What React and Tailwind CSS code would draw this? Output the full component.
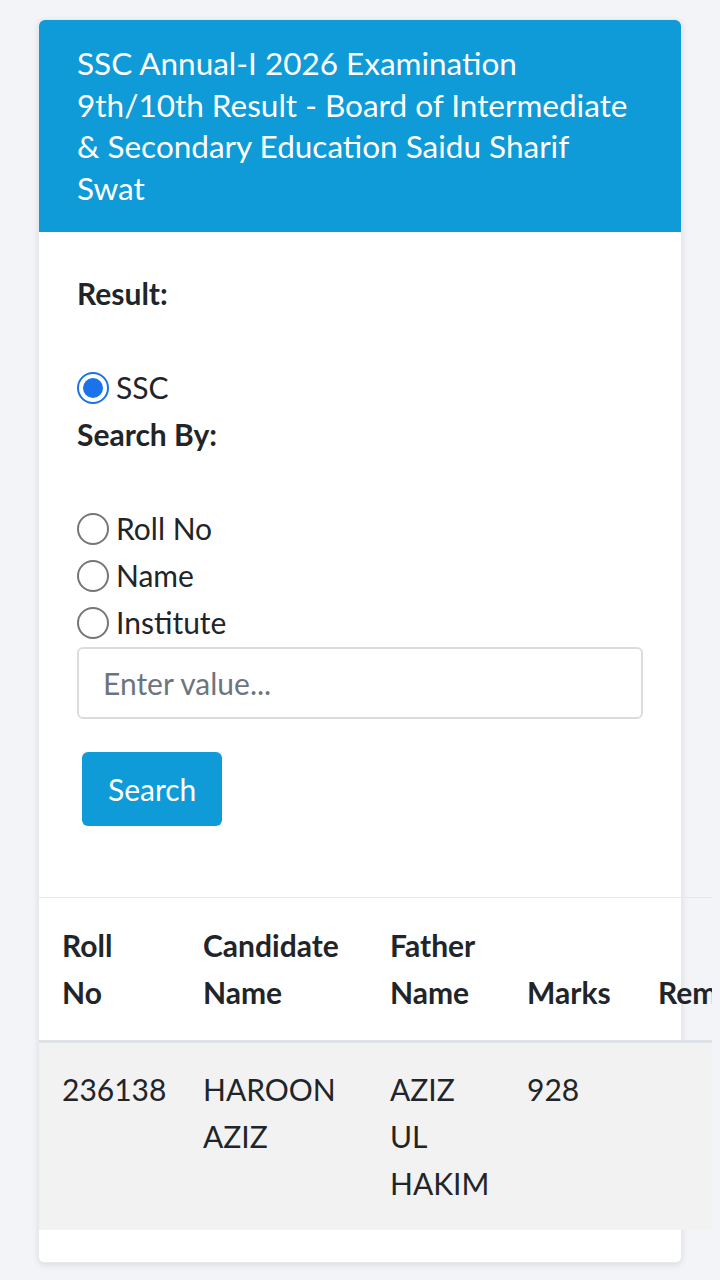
import { useState } from "react";

const FONT = "font-['Lato','Noto_Sans',sans-serif]";

const SEARCH_OPTIONS = ["Roll No", "Name", "Institute"];

const COLUMNS = [
  { label: ["Roll", "No"], width: "w-[141px]" },
  { label: ["Candidate", "Name"], width: "w-[187px]" },
  { label: ["Father", "Name"], width: "w-[137px]" },
  { label: ["", "Marks"], width: "w-[131px]" },
  { label: ["", "Remarks"], width: "w-[170px]" },
];

function Radio({ checked, label, onClick }) {
  return (
    <label className="flex items-center gap-[7px] h-[47px] cursor-pointer" onClick={onClick}>
      <span
        className={`flex items-center justify-center w-[32px] h-[32px] rounded-full border-2 ${
          checked ? "border-[#1a73e8]" : "border-[#767676]"
        } bg-white`}
      >
        {checked && <span className="w-[20px] h-[20px] rounded-full bg-[#1a73e8]" />}
      </span>
      <span className="text-[30px] text-[#212529]">{label}</span>
    </label>
  );
}

export default function App() {
  const [searchBy, setSearchBy] = useState(null);

  return (
    <div className={`${FONT} min-h-screen w-[720px] overflow-hidden bg-[#f3f4f7] pt-[19px] px-[38px] pb-[16px]`}>
      <div className="bg-white rounded-md border border-[#e8e9ec] shadow-[0_2px_6px_rgba(0,0,0,0.1)]">
        {/* Header */}
        <div className="bg-[#0f9ad8] rounded-t-md px-[38px] py-[23px] text-white text-[31.5px] leading-[41.5px]">
          SSC Annual-I 2026 Examination 9th/10th Result - Board of Intermediate &amp; Secondary Education Saidu Sharif Swat
        </div>

        {/* Form */}
        <div className="px-[38px] pt-[38px] text-[30px] leading-[47px] text-[#212529]">
          <div className="font-bold">Result:</div>
          <div className="h-[47px]" />
          <Radio checked label="SSC" />
          <div className="font-bold">Search By:</div>
          <div className="h-[47px]" />
          {SEARCH_OPTIONS.map((opt) => (
            <Radio
              key={opt}
              label={opt}
              checked={searchBy === opt}
              onClick={() => setSearchBy(opt)}
            />
          ))}
          <input
            type="text"
            placeholder="Enter value..."
            className="block w-full h-[72px] mt-[1px] rounded-md border-2 border-[#dcdcdc] px-[24px] text-[30px] text-[#212529] placeholder:text-[#6c757d] outline-none"
          />
          <button className="mt-[33px] ml-[5px] h-[74px] px-[26px] rounded-md bg-[#0f9ad8] text-white text-[30px]">
            Search
          </button>
        </div>

        {/* Results table */}
        <div className="mt-[71px] pb-[32px] w-[673px] overflow-hidden">
          <table className="w-[766px] table-fixed border-t border-[#e6e6e6] text-[30px] leading-[47px] text-[#212529]">
            <thead>
              <tr className="border-b-[3px] border-[#dee2e6]">
                {COLUMNS.map((col) => (
                  <th
                    key={col.label.join(" ")}
                    className={`${col.width} px-[23px] py-[24px] text-left align-bottom font-bold whitespace-nowrap`}
                  >
                    {col.label[0] && <div>{col.label[0]}</div>}
                    <div>{col.label[1]}</div>
                  </th>
                ))}
              </tr>
            </thead>
            <tbody>
              <tr className="bg-[#f2f2f2]">
                <td className="px-[23px] py-[23px] align-top">236138</td>
                <td className="px-[23px] py-[23px] align-top">
                  <div>HAROON</div>
                  <div>AZIZ</div>
                </td>
                <td className="px-[23px] py-[23px] align-top">
                  <div>AZIZ</div>
                  <div>UL</div>
                  <div>HAKIM</div>
                </td>
                <td className="px-[23px] py-[23px] align-top">928</td>
                <td className="px-[23px] py-[23px] align-top"></td>
              </tr>
            </tbody>
          </table>
        </div>
      </div>
    </div>
  );
}
